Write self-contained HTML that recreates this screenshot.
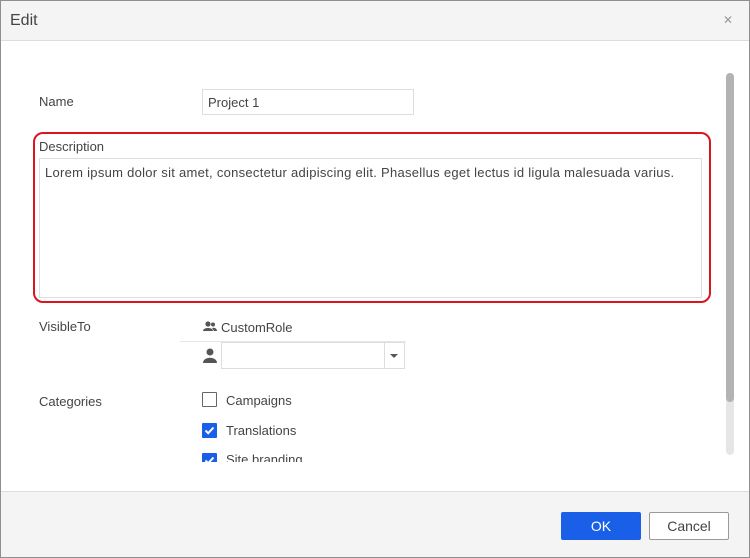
<!DOCTYPE html>
<html><head><meta charset="utf-8"><style>
*{box-sizing:border-box;margin:0;padding:0}
body{width:750px;height:558px;overflow:hidden;background:#fff;font-family:"Liberation Sans",sans-serif;font-size:13px;color:#333;position:relative}
.frame{position:absolute;left:0;top:0;width:750px;height:558px;border:1px solid #8f8f8f}
.hdr{position:absolute;left:1px;top:1px;width:748px;height:40px;background:#f4f4f4;border-bottom:1px solid #ddd}
.hdr .t{position:absolute;left:9px;top:11px;font-size:16px;color:#444;font-weight:300}
.hdr .x{position:absolute;right:16px;top:12px;font-size:12px;color:#999}
.ftr{position:absolute;left:1px;top:491px;width:748px;height:66px;background:#f4f4f4;border-top:1px solid #ddd}
.ok{position:absolute;left:561px;top:512px;width:80px;height:28px;background:#1a5fe8;color:#fff;border-radius:2px;text-align:center;line-height:28px;font-size:14px}
.cancel{position:absolute;left:649px;top:512px;width:80px;height:28px;background:#fff;border:1px solid #999;border-radius:2px;text-align:center;line-height:26px;font-size:14px;color:#444}
.lbl{position:absolute;left:39px;font-size:13px;color:#444}
.inp{position:absolute;border:1px solid #ddd;background:#fff}
.red{position:absolute;left:33px;top:132px;width:678px;height:171px;border:2px solid #d9161f;border-radius:10px}
.sb{position:absolute;left:726px;width:8px;border-radius:4px}
.cb{position:absolute;left:202px;width:15px;height:15px;border:1px solid #666;border-radius:1px;background:#fff}
.cb.on{background:#1a5fe8;border-color:#1a5fe8}
.cbl{position:absolute;left:226px;font-size:13px;color:#444}
</style></head><body>
<div class="hdr"><span class="t">Edit</span><span class="x">✕</span></div>

<div class="lbl" style="top:94px">Name</div>
<div class="inp" style="left:202px;top:89px;width:212px;height:26px"><span style="position:absolute;left:5px;top:5px;color:#444">Project 1</span></div>

<div class="red"></div>
<div class="lbl" style="top:139px">Description</div>
<div class="inp" style="left:39px;top:158px;width:663px;height:140px"><span style="position:absolute;left:5px;top:6px;color:#444;white-space:nowrap;letter-spacing:0.28px">Lorem ipsum dolor sit amet, consectetur adipiscing elit. Phasellus eget lectus id ligula malesuada varius.</span></div>

<div class="lbl" style="top:319px">VisibleTo</div>
<svg style="position:absolute;left:203px;top:321px" width="14" height="11" viewBox="0 0 14 11"><circle cx="5" cy="3" r="2.6" fill="#555"/><path d="M0 10 C0 6 10 6 10 10Z" fill="#555"/><circle cx="10" cy="3.5" r="2" fill="#555"/><path d="M9 7 C12 6 14 8 14 10 H11Z" fill="#555"/></svg>
<div style="position:absolute;left:221px;top:320px;color:#444">CustomRole</div>
<div style="position:absolute;left:180px;top:341px;width:226px;height:1px;background:#e6e6e6"></div>
<svg style="position:absolute;left:203px;top:348px" width="14" height="15" viewBox="0 0 14 15"><circle cx="7" cy="4" r="3.5" fill="#555"/><path d="M0 15 C0 8 14 8 14 15Z" fill="#555"/></svg>
<div class="inp" style="left:221px;top:342px;width:184px;height:27px"><div style="position:absolute;right:0;top:0;width:20px;height:25px;border-left:1px solid #ddd"></div><div style="position:absolute;right:6px;top:11px;border-left:4px solid transparent;border-right:4px solid transparent;border-top:4px solid #555"></div></div>

<div class="lbl" style="top:394px">Categories</div>
<div class="cb" style="top:392px"></div><div class="cbl" style="top:393px">Campaigns</div>
<div class="cb on" style="top:423px"><svg width="13" height="13" viewBox="0 0 13 13" style="position:absolute;left:0;top:0"><path d="M2.5 6.5 L5.2 9.2 L10.5 3.5" stroke="#fff" stroke-width="2" fill="none"/></svg></div><div class="cbl" style="top:423px">Translations</div>
<div style="position:absolute;left:0;top:452px;width:720px;height:10px;overflow:hidden">
<div class="cb on" style="top:1px"><svg width="13" height="13" viewBox="0 0 13 13" style="position:absolute;left:0;top:0"><path d="M2.5 6.5 L5.2 9.2 L10.5 3.5" stroke="#fff" stroke-width="2" fill="none"/></svg></div><div class="cbl" style="top:0px">Site branding</div></div>

<div class="sb" style="top:73px;height:382px;background:#e6e6e6"></div>
<div class="sb" style="top:73px;height:329px;background:#b3b3b3"></div>

<div class="ftr"></div>
<div class="ok">OK</div>
<div class="cancel">Cancel</div>
<div class="frame"></div>
</body></html>
